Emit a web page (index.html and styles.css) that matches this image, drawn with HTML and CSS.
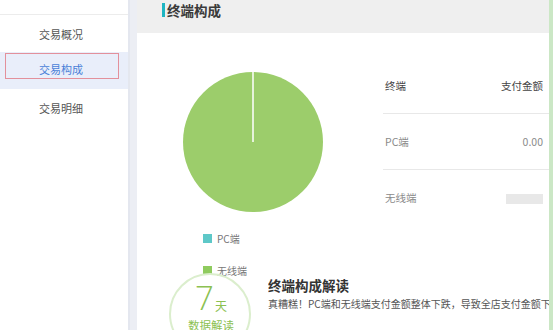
FILE: index.html
```html
<!DOCTYPE html>
<html lang="zh-CN">
<head>
<meta charset="utf-8">
<title>终端构成</title>
<link rel="stylesheet" href="styles.css">
</head>
<body>
<div class="page">
  <nav class="sidebar">
    <div class="nav-list">
      <div class="nav-item">交易概况</div>
      <div class="nav-item active"><span class="nav-box">交易构成</span></div>
      <div class="nav-item">交易明细</div>
    </div>
  </nav>
  <div class="gutter"></div>
  <main class="main">
    <header class="header">
      <h1 class="title">终端构成</h1>
    </header>
    <section class="content">
      <div class="top">
        <div class="chart">
          <svg class="pie" width="140" height="140" viewBox="0 0 140 140">
            <circle cx="70" cy="70" r="70" fill="#9ccd6b"/>
            <line x1="70" y1="0" x2="70" y2="70" stroke="#ffffff" stroke-width="1.5"/>
          </svg>
          <ul class="legend">
            <li class="legend-item"><span class="swatch swatch-pc"></span>PC端</li>
            <li class="legend-item"><span class="swatch swatch-wx"></span>无线端</li>
          </ul>
        </div>
        <table class="table">
          <tr class="row row-head"><td class="cell-name">终端</td><td class="cell-val">支付金额</td></tr>
          <tr class="row"><td class="cell-name">PC端</td><td class="cell-val">0.00</td></tr>
          <tr class="row row-last"><td class="cell-name">无线端</td><td class="cell-val"><span class="blur"></span></td></tr>
        </table>
      </div>
      <div class="insight">
        <div class="badge">
          <div class="days"><span class="num">7</span><span class="unit">天</span></div>
          <div class="badge-label">数据解读</div>
        </div>
        <div class="insight-text">
          <h2 class="insight-title">终端构成解读</h2>
          <p class="insight-desc">真糟糕！PC端和无线端支付金额整体下跌，导致全店支付金额下降</p>
        </div>
      </div>
    </section>
  </main>
  <div class="rightbar"></div>
</div>
</body>
</html>
```

FILE: styles.css
```css
* { box-sizing: border-box; }
html, body { margin: 0; padding: 0; }
body {
  width: 553px;
  height: 330px;
  overflow: hidden;
  background: #ffffff;
  font-family: "Noto Sans CJK SC", "Noto Sans", sans-serif;
  color: #555;
}
.page {
  display: flex;
  width: 553px;
  height: 330px;
}
.sidebar {
  width: 128px;
  flex: none;
  background: #fff;
  padding-top: 14px;
}
.nav-list {
  border-top: 1px solid #ececec;
}
.nav-item {
  height: 37px;
  display: flex;
  align-items: center;
  justify-content: center;
  padding-right: 6px;
  font-size: 11px;
  line-height: 14px;
  color: #555;
}
.nav-item.active {
  align-items: flex-start;
  justify-content: flex-start;
  padding: 1px 0 0 5px;
  background: #e9eefa;
  color: #4a7fd8;
}
.nav-box {
  width: 114px;
  height: 26px;
  border: 1px solid #e3909b;
  display: block;
  text-align: center;
  padding-top: 8px;
  padding-right: 2px;
  line-height: 14px;
}
.gutter {
  width: 9px;
  flex: none;
  background: #eceef4;
  border-left: 2px solid #e4e7ef;
}
.main {
  width: 412px;
  flex: none;
  display: flex;
  flex-direction: column;
  background: #fff;
}
.header {
  height: 33px;
  flex: none;
  background: #efefef;
  padding: 3px 0 0 25px;
}
.title {
  margin: 0;
  font-size: 13.5px;
  line-height: 14px;
  font-weight: bold;
  color: #3a3a3a;
  border-left: 3px solid #1fb5c2;
  padding-left: 2px;
}
.content {
  flex: 1;
  display: flex;
  flex-direction: column;
}
.top {
  display: flex;
}
.chart {
  width: 246px;
  flex: none;
  padding: 39px 0 0 46px;
}
.pie { display: block; }
.legend {
  list-style: none;
  margin: 19px 0 0 20px;
  padding: 0;
  display: flex;
  flex-direction: column;
  gap: 18px;
}
.legend-item {
  display: flex;
  align-items: center;
  height: 14px;
  font-size: 10px;
  color: #777;
}
.swatch {
  width: 9px;
  height: 9px;
  margin-right: 5px;
  display: inline-block;
}
.swatch-pc { background: #5ec8c8; }
.swatch-wx { background: #8fcb5e; }
.table {
  width: 166px;
  flex: none;
  margin-top: 25px;
  border-collapse: collapse;
  font-size: 10.5px;
  align-self: flex-start;
}
.row td {
  height: 56px;
  border-bottom: 1px solid #e8e8e8;
  vertical-align: middle;
  color: #8a8a8a;
}
.row-head td { height: 55px; color: #444; }
.row-last td { border-bottom: none; }
.cell-name { padding-left: 2px; text-align: left; }
.cell-val { padding-right: 6px; text-align: right; }
.blur {
  display: inline-block;
  width: 37px;
  height: 10px;
  background: #e8e8e8;
  vertical-align: middle;
}
.insight {
  display: flex;
  margin-top: -4px;
  padding-left: 32px;
}
.badge {
  width: 82px;
  height: 82px;
  flex: none;
  border: 2px solid #dbeecd;
  border-radius: 50%;
  display: flex;
  flex-direction: column;
  align-items: center;
  padding-top: 7px;
  color: #8cc152;
}
.days {
  display: flex;
  align-items: flex-end;
  height: 32px;
  padding-left: 2px;
}
.num {
  font-family: "Open Sans", "Liberation Sans", sans-serif;
  font-weight: 300;
  font-size: 33px;
  line-height: 32px;
}
.unit {
  font-size: 12px;
  line-height: 14px;
  margin-left: 1px;
  margin-bottom: 1px;
}
.badge-label {
  margin-top: 4px;
  font-size: 11.5px;
  line-height: 14px;
  padding-left: 2px;
}
.insight-text {
  margin-left: 17px;
  padding-top: 3px;
  white-space: nowrap;
  overflow: hidden;
  flex: 1;
  min-width: 0;
}
.insight-title {
  margin: 0;
  font-size: 13.5px;
  line-height: 18px;
  font-weight: bold;
  color: #333;
}
.insight-desc {
  margin: 3px 0 0;
  font-size: 10px;
  line-height: 13px;
  color: #555;
}
.rightbar {
  width: 4px;
  flex: none;
  background: #cbe7c5;
}
```
